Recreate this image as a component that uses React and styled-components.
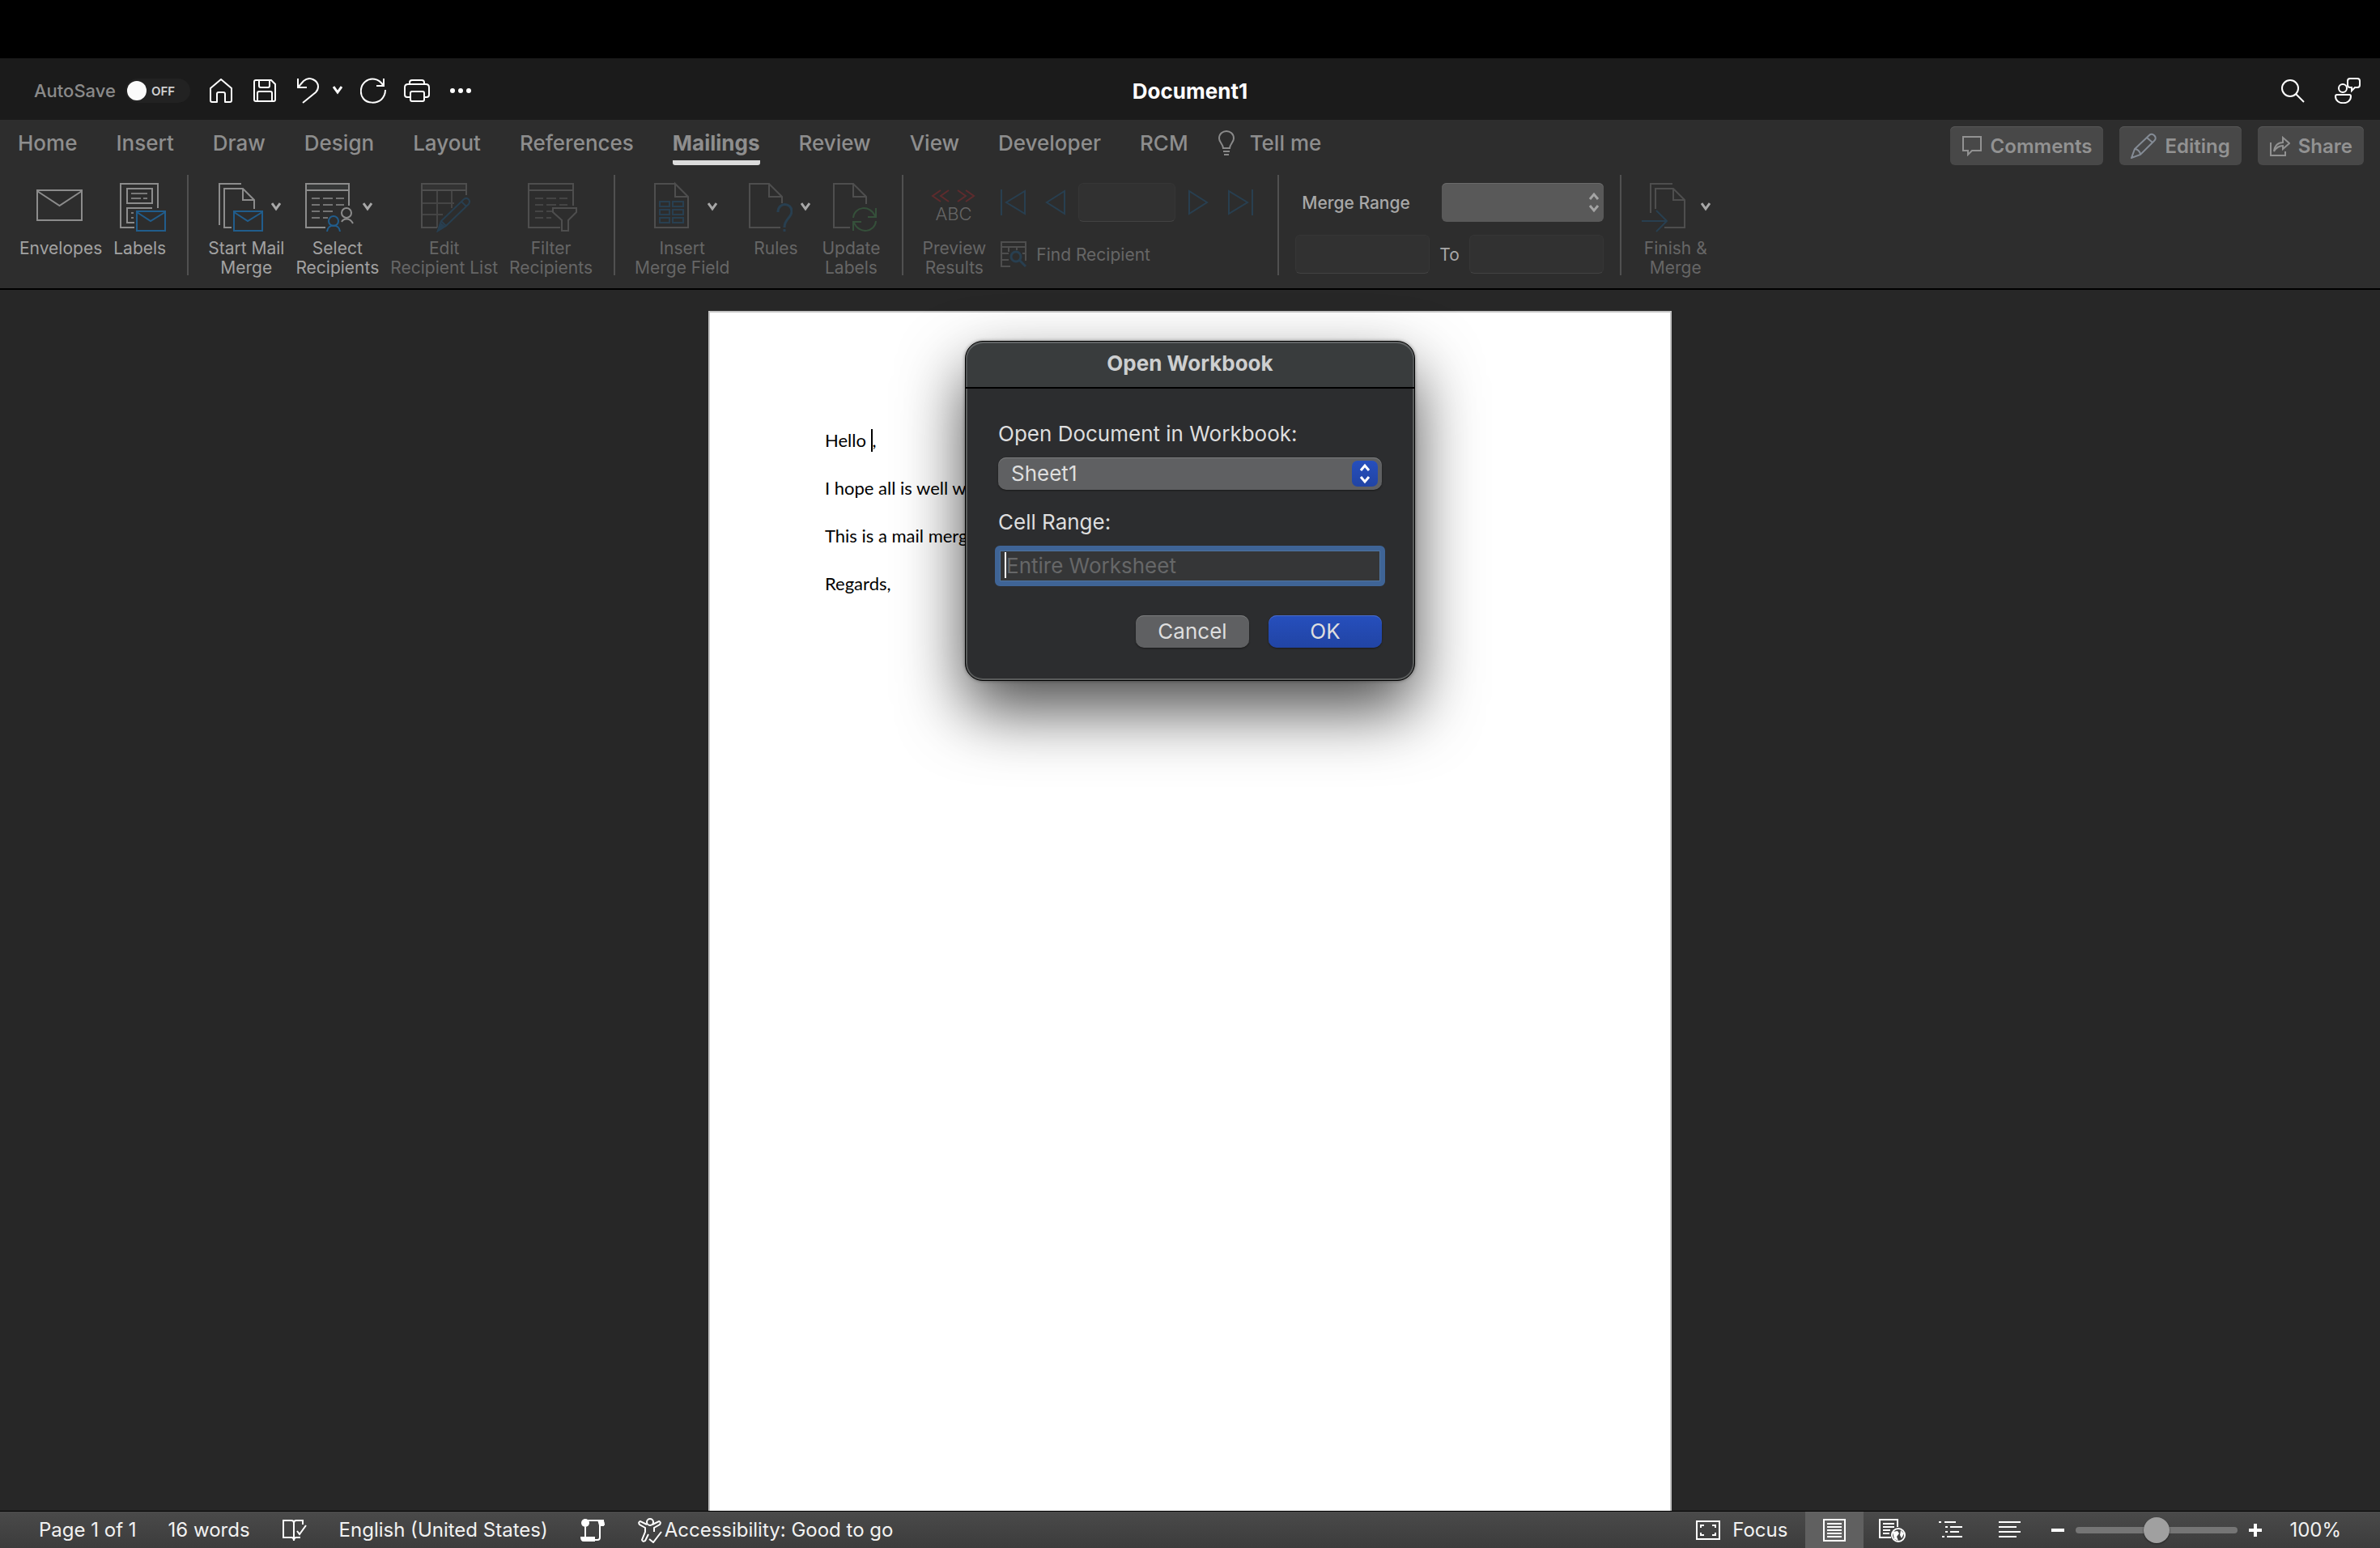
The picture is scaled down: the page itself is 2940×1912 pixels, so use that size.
import styled, { createGlobalStyle } from "styled-components";

const GlobalStyle = createGlobalStyle`
    * { box-sizing: border-box; }
    body {
        margin: 0;
        background: #000;
        font-family: Inter, "Liberation Sans", sans-serif;
    }
    button, input, select {
        font: inherit;
        color: inherit;
        border: none;
        margin: 0;
        padding: 0;
        background: none;
    }
    svg { display: block; flex: none; }
`

/* ---------- icons ---------- */

const Icon = ({ w = 32, h = w, color = "#fff", stroke = 2, children }) => (
    <svg width={w} height={h} viewBox={`0 0 ${w} ${h}`} fill="none" stroke={color} strokeWidth={stroke} aria-hidden="true">
        {children}
    </svg>
)

const GREY = "#8c8c8c";
const DIM = "#4e4e4e";
const BLUE = "#215d8c";
const DIMBLUE = "#283f50";

const Chevron = ({ color = "#a8a8a8" }) => (
    <Icon w={12} color={color} stroke={3}><path d="M1 1L6 8L11 1" /></Icon>
)

const SmallEnvelope = () => (
    <g stroke={BLUE}>
        <rect x="28" y="37" width="35" height="24" />
        <path d="M28 38L45 49L63 38" />
    </g>
)

const Dashes = ({ x = 0 }) => (
    <path opacity=".75" d={[
        [21, 3], [29, 3], [37, 2], [45, 2]
    ].map(([y, n]) => `M${11 + x} ${y}h10` + `M${25 + x} ${y}h${y === 45 ? 6 : 12}` + (n > 2 ? `M${41 + x} ${y}h10` : "")).join("")} />
)

const art = {
    envelope: <Icon w={64} color={GREY}><rect x="3" y="11" width="55" height="37" /><path d="M3 12L30.500 30L58 12" /></Icon>,
    labels: (
        <Icon w={64} color={GREY}>
            <path d="M54 33V3H8V57H25M47 33H16V51H25" />
            <rect x="16" y="9" width="31" height="18" />
            <path opacity=".8" d="M21 15H41M21 21H33M36 21H41M21 39H24M21 45H24" />
            <SmallEnvelope />
        </Icon>
    ),
    start: (
        <Icon w={64} color={GREY}>
            <path d="M37 3H10V54M25 57H16V9H39L53 23V34M39 9V23H53" />
            <SmallEnvelope />
        </Icon>
    ),
    select: (
        <Icon w={64} color={GREY}>
            <path d="M4 3H57V11H4Z" fill="#363838" />
            <path d="M28 57H4V3H57V30" />
            <Dashes />
            <circle cx="54" cy="39" r="6" />
            <path d="M48 50C50 46 58 44 62 52" />
            <g stroke={BLUE}><circle cx="38" cy="49" r="6" /><path d="M30 62C31 52 45 52 46 62" /></g>
        </Icon>
    ),
    edit: (
        <Icon w={64} color={DIM}>
            <path d="M4 3H59V11H4Z" fill="#333" />
            <path d="M23 57H4V3H59V17" />
            <path opacity=".75" d="M23 11V57M41 11V33M4 27H44M4 41H30" />
            <g stroke={DIMBLUE}>
                <path d="M24 61L28 49L56 22C60 19 65 23 62 28L34 55ZM53 25L59 31M28 49L34 55" />
                <path d="M24 61L27 52L32 56Z" fill={DIMBLUE} />
            </g>
        </Icon>
    ),
    filter: (
        <Icon w={64} color={DIM}>
            <path d="M43 57H4V3H59V30M4 11H59" />
            <Dashes x={1} />
            <path fill="#2d2d2d" d="M34 33H63V38L53 48V61H45V48L34 38Z" />
        </Icon>
    ),
    field: (
        <Icon w={64} color={DIM}>
            <path d="M33 3H9V57H50V19L34 3V19H50" />
            <path stroke={DIMBLUE} d="M15 25h12v6h-12zM31 25h13v6h-13zM15 35h12v6h-12zM31 35h13v6h-13zM15 45h12v6h-12zM31 45h13v6h-13z" />
        </Icon>
    ),
    rules: (
        <Icon w={64} color={DIM}>
            <path d="M49 57H11V3H35L51 19V27M35 3V19H51" />
            <path stroke={DIMBLUE} strokeWidth="3" d="M46 38C46 25 63 26 63 37C63 45 54 46 54 57M54 59V62" />
        </Icon>
    ),
    update: (
        <Icon w={64} color={DIM}>
            <path d="M31 57H11V3H35L51 19V28M35 3V19H51" />
            <path stroke="#35503a" d="M35 45C36 31 56 28 62 43M63 33V44H53M63 49C62 63 42 66 36 51M35 61V50H45" />
        </Icon>
    ),
    preview: (
        <Icon w={64} color="#5e2b2d">
            <path d="M15 11L5 18L15 25M25 11L15 18L25 25M36 11L46 18L36 25M46 11L56 18L46 25" />
            <text x="31" y="48" fontSize="22" fontWeight="300" textAnchor="middle" fill="#666" stroke="none">ABC</text>
        </Icon>
    ),
    finish: (
        <Icon w={64} color={DIM}>
            <path d="M39 3H12V39M18 34V9H40L54 23V57H29M40 9V23H54" />
            <path stroke={DIMBLUE} d="M1 49H32M19 36L32 49L19 62" />
        </Icon>
    ),
}

const HomeIcon = () => <Icon><path strokeLinejoin="round" d="M3 13L16 2L29 13V28Q29 30 27 30H21V20Q21 18 19 18H13Q11 18 11 20V30H5Q3 30 3 28Z" /></Icon>
const SaveIcon = () => <Icon><path d="M5 3H24L29 8V27Q29 29 27 29H5Q3 29 3 27V5Q3 3 5 3ZM9 3V10Q9 12 11 12H20Q22 12 22 10V3M7 29V19Q7 17 9 17H23Q25 17 25 19V29" /></Icon>
const UndoIcon = () => <Icon><path d="M3 1V12H14M3 12L10 4C18 -3 28 4 28 11C28 14 27 16 25 18L9 31" /></Icon>
const RedoIcon = () => <Icon><path d="M29 1V10H20M28 9C23 1 13 -1 6 5C0 10 -1 20 4 26C9 32 20 32 26 27C29 24 31 20 31 15" /></Icon>
const PrintIcon = () => <Icon><path d="M7 8V6Q7 3 10 3H22Q25 3 25 6V8M8 24H4Q1 24 1 21V12Q1 8 5 8H27Q31 8 31 12V21Q31 24 28 24H24M9 17H23Q25 17 25 19V27Q25 29 23 29H10Q8 29 8 27V19Q8 17 10 17Z" /></Icon>
const DotsIcon = () => <Icon><g fill="#fff" stroke="none"><circle cx="6" cy="16" r="3" /><circle cx="16" cy="16" r="3" /><circle cx="26" cy="16" r="3" /></g></Icon>
const SearchIcon = () => <Icon><circle cx="13" cy="13" r="10" /><path d="M20 20L30 30" /></Icon>
const PeopleIcon = () => <Icon><circle cx="10" cy="13" r="5" /><path d="M3 21H18Q20 21 20 23C20 34 1 34 1 23Q1 21 3 21ZM19 1H28Q31 1 31 4V9Q31 12 28 12H25L21 16V12H19Q16 12 16 9V4Q16 1 19 1Z" /></Icon>
const BulbIcon = () => <Icon w={22} h={32} color="#8a8a8a"><path d="M7 22C7 17 2 15 2 10C2 -2 20 -2 20 10C20 15 15 17 15 22ZM7 26H15M8 30H14" /></Icon>
const CommentIcon = () => <Icon w={26} color="#929292"><path d="M2 2H24V19H13L8 24V19H2Z" /></Icon>
const PencilIcon = () => <Icon color="#858c96"><path d="M1 31L5 20L23 3C27 -1 34 6 29 10L12 27ZM20 6L27 12M5 20C8 20 12 23 12 27" /></Icon>
const ShareIcon = () => <Icon w={26} color="#929292"><path d="M2 9V25H20V20M6 20C7 13 11 9 17 9V3L25 10L17 17V13C12 13 9 15 6 20Z" /></Icon>
const FindIcon = () => (
    <Icon color={DIM}><path d="M12 31H1V1H31V24M1 7H31M1 15H10M1 23H10M10 7V13M20 7V11M27 15H31" /><g stroke={DIMBLUE} strokeWidth="3"><circle cx="19" cy="19" r="6" /><path d="M23 23L31 31" /></g></Icon>
)
const ProofIcon = () => <Icon><path d="M15 28V7Q15 4 12 4H2V25H12Q15 25 15 29Q15 25 18 25H23M15 7Q15 4 18 4H26V9M19 17L22 21L30 10" /></Icon>
const MacroIcon = () => <Icon><path d="M7 12V28H22Q25 28 25 25V5M10 4H29V10H25" /><circle cx="7" cy="7" r="5" fill="#fff" stroke="none" /><path fill="#fff" stroke="none" d="M1 24H19V30H5Q1 30 1 24ZM22 3H27Q31 3 31 10H24Z" /></Icon>
const AccessIcon = () => <Icon><path d="M12 9L4 5Q1 6 3 9L10 13V18L6 28Q7 31 10 29L14 21M19 9L27 5Q30 6 28 9L21 13V18M15 27L20 31L30 18" /><circle cx="16" cy="6" r="4" /></Icon>
const FocusIcon = () => <Icon w={32}><path d="M2 5H30V27H2ZM7 13V10H11M21 10H25V13M7 19V22H11M21 22H25V19" /></Icon>
const PrintLayoutIcon = () => <Icon><path d="M3 3H29V29H3ZM7 8H25M7 12H25M7 16H25M7 20H25M7 24H25" /></Icon>
const WebIcon = () => (
    <Icon w={36} h={32}><path d="M16 25H2V3H24V12M6 8H20M6 12H20M6 16H15M6 20H14" /><circle cx="25" cy="22" r="8" /><path fill="#fff" stroke="none" d="M18 18L24 17L26 20L23 24L25 29L20 27ZM28 16L32 20L29 26L27 22Z" /></Icon>
)
const OutlineIcon = () => <Icon><path d="M1 6H4M8 6H22M9 12H12M15 12H30M9 18H12M15 18H26M5 24H8M11 24H30" /></Icon>
const DraftIcon = () => <Icon><path d="M3 6H30M3 12H25M3 18H30M3 24H25" /></Icon>
const StepperIcon = ({ color = "#a4a4a4" }) => <Icon w={14} h={28} color={color} stroke={3}><path d="M2 10L7 4L12 10M2 18L7 24L12 18" /></Icon>

/* ---------- shell ---------- */

const Window = styled.div`
    position: relative;
    height: 100vh;
    display: flex;
    flex-direction: column;
    background: #272727;
    overflow: hidden;
`
const MenuStrip = styled.div`
    flex: none;
    height: 72px;
    background: #000;
`
const TitleBar = styled.header`
    flex: none;
    display: grid;
    grid-template-columns: 1fr auto 1fr;
    align-items: center;
    height: 76px;
    padding: 4px 24px 0;
    background: #1b1b1b;
    color: #fff;
`
const Title = styled.h1`
    margin: 0;
    font-size: 26px;
    font-weight: 700;
`
const QuickBar = styled.div`
    display: flex;
    align-items: center;
    gap: 22px;
    padding-left: 18px;
`
const IconRow = styled.div`
    display: flex;
    justify-content: flex-end;
    gap: 36px;
`
const AutoSave = styled.label`
    display: flex;
    align-items: center;
    gap: 12px;
    font-size: 22px;
    font-weight: 500;
    color: #8a8a8a;
`
const Toggle = styled.button`
    display: flex;
    align-items: center;
    gap: 6px;
    width: 80px;
    height: 30px;
    padding: 0 2px;
    border-radius: 15px;
    background: #222;
    font-size: 15px;
    font-weight: 600;
    color: #d0d0d0;
    &::before {
        content: "";
        width: 24px;
        height: 24px;
        border-radius: 50%;
        background: #fafafa;
    }
`
const IconButton = styled.button`
    display: flex;
    align-items: center;
    gap: 14px;
`

/* ---------- ribbon ---------- */

const Ribbon = styled.section`
    flex: none;
    background: #2d2d2d;
    border-bottom: 2px solid #000;
`
const TabRow = styled.div`
    display: flex;
    justify-content: space-between;
    height: 60px;
    padding: 8px 20px 4px 22px;
`
const Tabs = styled.nav`
    display: flex;
    gap: 48px;
`
const Tab = styled.a`
    display: flex;
    align-items: flex-start;
    gap: 18px;
    padding-top: 5px;
    font-size: 26px;
    line-height: 32px;
    font-weight: ${p => p.$active ? 700 : 500};
    color: #8e8e8e;
    text-decoration: none;
    border-bottom: 6px solid ${p => p.$active ? "#dcdcdc" : "transparent"};
    border-radius: 3px;
    white-space: nowrap;
`
const TellMe = styled(Tab)`
    margin-left: -12px;
`
const Actions = styled.div`
    display: flex;
    gap: 20px;
`
const Action = styled.button`
    display: flex;
    align-items: center;
    gap: 10px;
    height: 48px;
    padding: 0 14px;
    border-radius: 6px;
    background: #484848;
    box-shadow: inset 0 1px #585858;
    font-size: 24px;
    font-weight: 600;
    color: #929292;
`
const Tools = styled.div`
    display: flex;
    padding: 8px 0 16px;
`
const Group = styled.div`
    display: flex;
    gap: 14px;
    height: 124px;
    padding: ${p => p.$tight ? "8px 16px 0" : "8px 26px 0 24px"};
    border-right: 2px solid #505050;
    &:last-child { border: none; }
`
const ToolButton = styled.button`
    display: flex;
    flex-direction: column;
    align-items: center;
    gap: 7px;
    font-size: 21px;
    line-height: 24px;
    color: ${p => p.disabled ? "#666" : "#a2a2a2"};
    white-space: pre-line;
`
const ToolArt = styled.span`
    display: flex;
    align-items: center;
    gap: 10px;
    height: 64px;
`
const Stack = styled.div`
    display: flex;
    flex-direction: column;
    gap: 16px;
    padding: 2px 4px 0;
    font-size: 21px;
`
const Line = styled.div`
    display: flex;
    align-items: center;
    justify-content: space-between;
    gap: 12px;
    height: 48px;
    color: #a8a8a8;
`
const RecordNav = styled(Line)`
    > :first-child { margin-right: 8px; }
    > :last-child { margin-left: 8px; }
`
const FindButton = styled.button`
    display: flex;
    align-items: center;
    gap: 12px;
    height: 48px;
    color: #666;
`
const Field = styled.input`
    width: ${p => p.$w}px;
    height: 48px;
    border: 1px solid #363636;
    border-bottom-color: #424242;
    border-radius: 6px;
    background: #313131;
`
const RangeLabel = styled.label`
    padding-left: 8px;
    font-weight: 500;
`
const SelectWrap = styled.span`
    position: relative;
    display: flex;
    width: ${p => p.$w};
    > svg, > span {
        position: absolute;
        right: 5px;
        top: 0;
        bottom: 0;
        margin: auto 0;
        pointer-events: none;
    }
`
const RangeSelect = styled.select`
    appearance: none;
    width: 100%;
    height: 48px;
    border-radius: 6px;
    background: #595959;
    box-shadow: inset 0 1px #6a6a6a;
`

/* ---------- document ---------- */

const Workspace = styled.main`
    flex: 1;
    min-height: 0;
    display: flex;
    justify-content: center;
    padding-top: 26px;
`
const Page = styled.article`
    width: 1190px;
    padding: 144px 142px;
    border: 2px solid #c4c4c4;
    border-bottom: none;
    background: #fff;
    color: #000;
    font-family: Lato, sans-serif;
    font-size: 22px;
    line-height: 28px;
    p { margin: 0 0 31px; }
`
const Caret = styled.span`
    display: inline-block;
    width: 2px;
    height: 28px;
    background: #000;
    vertical-align: top;
`

/* ---------- dialog ---------- */

const Overlay = styled.div`
    position: absolute;
    inset: 0;
    display: flex;
    justify-content: center;
    align-items: flex-start;
    padding-top: 421px;
`
const Dialog = styled.form`
    width: 556px;
    border: 1px solid #000;
    border-radius: 22px;
    background: #2c2d2f;
    box-shadow: inset 0 0 0 2px #5a5c5c, 0 0 4px rgba(0, 0, 0, .4), 0 36px 80px rgba(0, 0, 0, .7);
    color: #dedede;
    font-size: 26px;
    overflow: hidden;
`
const DialogTitle = styled.h2`
    margin: 0;
    height: 58px;
    padding-top: 1px;
    border-bottom: 2px solid #000;
    border-radius: 22px 22px 0 0;
    background: #393c3d;
    box-shadow: inset 0 2px #606364, inset 2px 0 #505354, inset -2px 0 #505354;
    font-size: 26px;
    line-height: 52px;
    font-weight: 700;
    text-align: center;
    color: #cdcfd0;
`
const DialogBody = styled.div`
    display: flex;
    flex-direction: column;
    gap: 24px;
    padding: 40px;
`
const DialogField = styled.div`
    display: flex;
    flex-direction: column;
    gap: 13px;
    label { line-height: 32px; }
`
const SheetSelect = styled.select`
    appearance: none;
    width: 100%;
    height: 40px;
    padding: 0 16px 2px;
    border-radius: 10px;
    background: #5f6062;
    box-shadow: inset 0 1px #7c7d7e, 0 1px 2px #1a1a1a;
`
const BlueKnob = styled.span`
    display: flex;
    align-items: center;
    justify-content: center;
    width: 32px;
    height: 32px;
    border-radius: 7px;
    background: linear-gradient(#264fbd, #2144a4);
`
const RangeField = styled.div`
    position: relative;
    margin: 0 -4px;
    border: 6px solid #3f6496;
    border-radius: 6px;
    background: #353637;
    box-shadow: inset 0 0 0 1px #50749f;
    input {
        display: block;
        width: 100%;
        height: 38px;
        padding: 0 8px 2px;
        outline: none;
    }
    input::placeholder { color: #666768; opacity: 1; }
    &::before {
        content: "";
        position: absolute;
        left: 6px;
        top: 2px;
        width: 2px;
        height: 32px;
        background: #fff;
    }
`
const Buttons = styled.div`
    display: flex;
    justify-content: flex-end;
    gap: 24px;
    padding-top: 12px;
`
const PushButton = styled.button`
    width: 140px;
    height: 40px;
    padding-bottom: 2px;
    border-radius: 10px;
    background: ${p => p.$primary ? "linear-gradient(#264fbd, #2144a4)" : "#5f6062"};
    box-shadow: inset 0 1px ${p => p.$primary ? "#4a6dcc" : "#7c7d7e"}, 0 1px 2px #1a1a1a;
`

/* ---------- status bar ---------- */

const StatusBar = styled.footer`
    flex: none;
    display: flex;
    justify-content: space-between;
    height: 46px;
    padding: 0 48px;
    border-top: 1px solid #000;
    background: linear-gradient(#4a4a4a, #3c3c3c);
    color: #f2f2f2;
    font-size: 24px;
`
const StatusSide = styled.div`
    display: flex;
    align-items: center;
    gap: ${p => p.$gap}px;
`
const StatusText = styled.span`
    white-space: nowrap;
`
const StatusButton = styled.button`
    display: flex;
    align-items: center;
    gap: ${p => p.$gap || 0}px;
    white-space: nowrap;
`
const Views = styled.div`
    display: flex;
    margin-left: 22px;
`
const ViewButton = styled.button`
    display: flex;
    align-items: center;
    justify-content: center;
    width: 72px;
    height: 45px;
    background: ${p => p.$active ? "#606060" : "none"};
`
const Zoom = styled.div`
    display: flex;
    align-items: center;
    gap: 14px;
    margin: 0 34px 0 16px;
`
const Slider = styled.input`
    appearance: none;
    width: 200px;
    height: 32px;
    &::-webkit-slider-runnable-track {
        height: 8px;
        border-radius: 4px;
        background: #757575;
    }
    &::-webkit-slider-thumb {
        appearance: none;
        width: 32px;
        height: 32px;
        margin-top: -12px;
        border-radius: 50%;
        background: #a0a0a0;
        box-shadow: 0 1px 2px #222;
    }
`

const Tool = ({ icon, label, menu, disabled }) => (
    <ToolButton type="button" disabled={disabled}>
        <ToolArt>{art[icon]}{menu && <Chevron />}</ToolArt>
        {label}
    </ToolButton>
)

const RecordButton = ({ label, d }) => (
    <IconButton type="button" aria-label={label}><Icon color={DIMBLUE}><path d={d} /></Icon></IconButton>
)

const TABS = ["Home", "Insert", "Draw", "Design", "Layout", "References", "Mailings", "Review", "View", "Developer", "RCM"];

const App = () => {
    return (
        <Window>
            <GlobalStyle />
            <MenuStrip />
            <TitleBar>
                <QuickBar>
                    <AutoSave>
                        AutoSave
                        <Toggle type="button" role="switch" aria-checked="false">OFF</Toggle>
                    </AutoSave>
                    <IconButton aria-label="Home"><HomeIcon /></IconButton>
                    <IconButton aria-label="Save"><SaveIcon /></IconButton>
                    <IconButton aria-label="Undo"><UndoIcon /><Chevron color="#fff" /></IconButton>
                    <IconButton aria-label="Redo"><RedoIcon /></IconButton>
                    <IconButton aria-label="Print"><PrintIcon /></IconButton>
                    <IconButton aria-label="More"><DotsIcon /></IconButton>
                </QuickBar>
                <Title>Document1</Title>
                <IconRow>
                    <IconButton aria-label="Search"><SearchIcon /></IconButton>
                    <IconButton aria-label="Collaborate"><PeopleIcon /></IconButton>
                </IconRow>
            </TitleBar>

            <Ribbon>
                <TabRow>
                    <Tabs>
                        {TABS.map(tab => <Tab key={tab} href="#" $active={tab === "Mailings"}>{tab}</Tab>)}
                        <TellMe href="#"><BulbIcon />Tell me</TellMe>
                    </Tabs>
                    <Actions>
                        <Action><CommentIcon />Comments</Action>
                        <Action><PencilIcon />Editing</Action>
                        <Action><ShareIcon />Share</Action>
                    </Actions>
                </TabRow>
                <Tools>
                    <Group>
                        <Tool icon="envelope" label="Envelopes" />
                        <Tool icon="labels" label="Labels" />
                    </Group>
                    <Group>
                        <Tool icon="start" label={"Start Mail\nMerge"} menu />
                        <Tool icon="select" label={"Select\nRecipients"} menu />
                        <Tool icon="edit" label={"Edit\nRecipient List"} disabled />
                        <Tool icon="filter" label={"Filter\nRecipients"} disabled />
                    </Group>
                    <Group>
                        <Tool icon="field" label={"Insert\nMerge Field"} menu disabled />
                        <Tool icon="rules" label="Rules" menu disabled />
                        <Tool icon="update" label={"Update\nLabels"} disabled />
                    </Group>
                    <Group>
                        <Tool icon="preview" label={"Preview\nResults"} disabled />
                        <Stack>
                            <RecordNav>
                                <RecordButton label="First record" d="M1 0V32M30 2V30L7 16Z" />
                                <RecordButton label="Previous record" d="M27 2V30L5 16Z" />
                                <Field $w={120} aria-label="Record number" />
                                <RecordButton label="Next record" d="M5 2V30L27 16Z" />
                                <RecordButton label="Last record" d="M31 0V32M2 2V30L25 16Z" />
                            </RecordNav>
                            <FindButton><FindIcon />Find Recipient</FindButton>
                        </Stack>
                    </Group>
                    <Group $tight>
                        <Stack>
                            <Line>
                                <RangeLabel htmlFor="merge-range">Merge Range</RangeLabel>
                                <SelectWrap $w="200px">
                                    <RangeSelect id="merge-range"><option></option></RangeSelect>
                                    <StepperIcon />
                                </SelectWrap>
                            </Line>
                            <Line>
                                <Field $w={166} id="range-from" aria-label="From" />
                                <label htmlFor="range-to">To</label>
                                <Field $w={166} id="range-to" />
                            </Line>
                        </Stack>
                    </Group>
                    <Group>
                        <Tool icon="finish" label={"Finish &\nMerge"} menu disabled />
                    </Group>
                </Tools>
            </Ribbon>

            <Workspace>
                <Page>
                    <p>Hello <Caret />,</p>
                    <p>I hope all is well w</p>
                    <p>This is a mail merg</p>
                    <p>Regards,</p>
                </Page>
            </Workspace>

            <StatusBar>
                <StatusSide $gap={39}>
                    <StatusText>Page 1 of 1</StatusText>
                    <StatusText>16 words</StatusText>
                    <StatusButton aria-label="Proofing"><ProofIcon /></StatusButton>
                    <StatusButton>English (United States)</StatusButton>
                    <StatusButton aria-label="Macros"><MacroIcon /></StatusButton>
                    <StatusButton $gap={2}><AccessIcon />Accessibility: Good to go</StatusButton>
                </StatusSide>
                <StatusSide $gap={0}>
                    <StatusButton $gap={14}><FocusIcon />Focus</StatusButton>
                    <Views>
                        <ViewButton $active aria-label="Print layout"><PrintLayoutIcon /></ViewButton>
                        <ViewButton aria-label="Web layout"><WebIcon /></ViewButton>
                        <ViewButton aria-label="Outline"><OutlineIcon /></ViewButton>
                        <ViewButton aria-label="Draft"><DraftIcon /></ViewButton>
                    </Views>
                    <Zoom>
                        <IconButton aria-label="Zoom out"><Icon w={16} stroke={4}><path d="M0 8H16" /></Icon></IconButton>
                        <Slider type="range" min="0" max="100" defaultValue="50" aria-label="Zoom" />
                        <IconButton aria-label="Zoom in"><Icon w={16} stroke={4}><path d="M0 8H16M8 0V16" /></Icon></IconButton>
                    </Zoom>
                    <StatusText>100%</StatusText>
                </StatusSide>
            </StatusBar>

            <Overlay>
                <Dialog role="dialog" aria-labelledby="dialog-title" onSubmit={e => e.preventDefault()}>
                    <DialogTitle id="dialog-title">Open Workbook</DialogTitle>
                    <DialogBody>
                        <DialogField>
                            <label htmlFor="sheet">Open Document in Workbook:</label>
                            <SelectWrap $w="100%">
                                <SheetSelect id="sheet"><option>Sheet1</option></SheetSelect>
                                <BlueKnob><StepperIcon color="#fff" /></BlueKnob>
                            </SelectWrap>
                        </DialogField>
                        <DialogField>
                            <label htmlFor="cell-range">Cell Range:</label>
                            <RangeField><input id="cell-range" placeholder="Entire Worksheet" /></RangeField>
                        </DialogField>
                        <Buttons>
                            <PushButton type="button">Cancel</PushButton>
                            <PushButton $primary>OK</PushButton>
                        </Buttons>
                    </DialogBody>
                </Dialog>
            </Overlay>
        </Window>
    )
}

export default App
